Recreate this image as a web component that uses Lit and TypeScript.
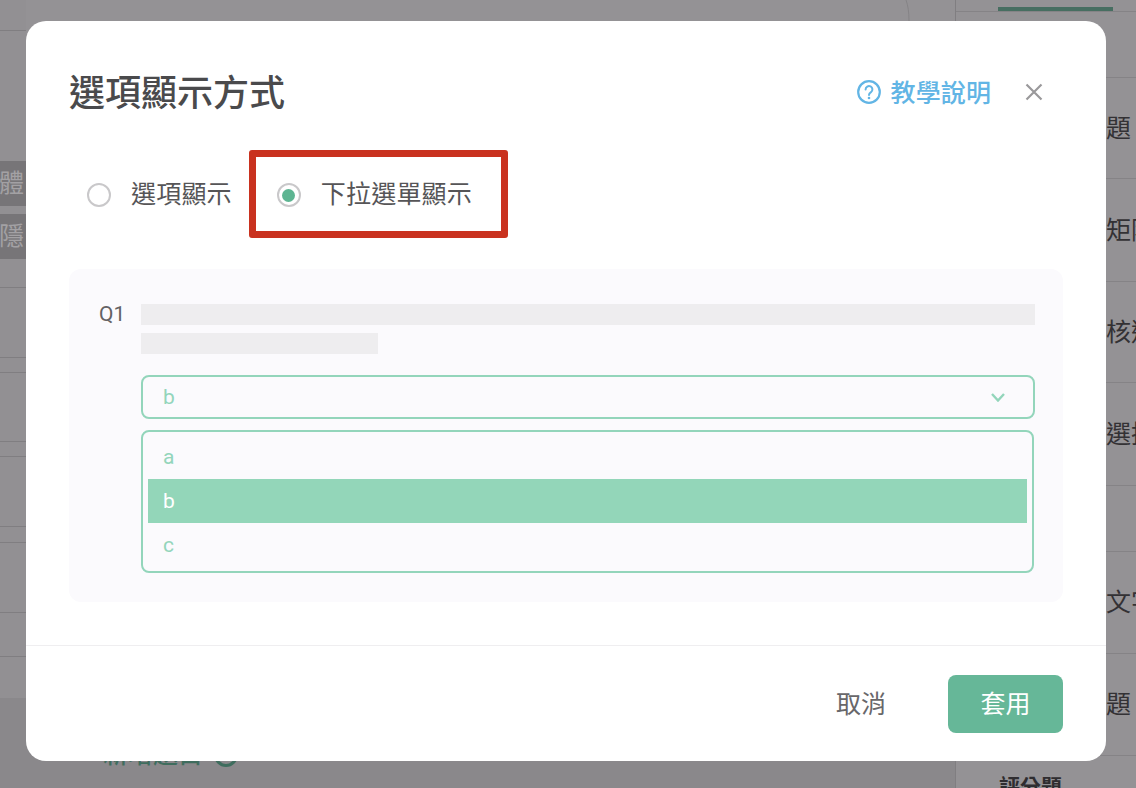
import { LitElement, html, css } from "lit";
import { customElement } from "lit/decorators.js";

@customElement("app-root")
export class AppRoot extends LitElement {
  static styles = css`
    :host {
      display: block;
      width: 1136px;
      height: 788px;
      position: relative;
      overflow: hidden;
      font-family: "Roboto", "Noto Sans CJK TC", sans-serif;
      background: #949295;
    }
    * { box-sizing: border-box; }

    /* dimmed page behind the dialog */
    .page { display: flex; height: 788px; }
    .left { width: 955px; flex: none; display: flex; flex-direction: column; position: relative; }
    .side { width: 26px; flex: 1; display: flex; flex-direction: column; overflow: hidden; background: #929093; }
    .line { flex: none; border-bottom: 1px solid #807e81; }
    .tag {
      flex: none; height: 45px; background: #777578; color: #a3a1a4;
      font-size: 25px; line-height: 45px; display: flex; justify-content: flex-end; padding-right: 2px;
      white-space: nowrap;
    }
    .lower { height: 90px; flex: none; background: #8a888b; display: flex; padding: 42px 0 0 103px; gap: 8px; color: #3f6d5e; font-size: 25px; line-height: 30px; font-weight: 500; }
    .lower-icon { width: 24px; height: 24px; margin: 3px 0 0 3px; border: 3px solid #3f6d5e; border-radius: 50%; }
    .right { flex: none; width: 181px; height: 788px; overflow: hidden; border-left: 1px solid #807e81; display: flex; flex-direction: column; }
    .tabs { height: 78px; flex: none; border-bottom: 1px solid #858386; position: relative; }
    .tabline { height: 1px; background: #858386; margin-top: 11px; }
    .tabbar { position: absolute; left: 42px; top: 7px; width: 115px; height: 4px; background: #476e61; }
    .row {
      flex: none; display: flex; align-items: center; padding: 0 0 5px 150px; border-bottom: 1px solid #858386;
      font-size: 25px; color: #333134; white-space: nowrap; overflow: hidden;
    }
    .score { padding: 16px 0 0 43px; font-size: 21px; font-weight: 700; color: #2f2d30; line-height: 30px; white-space: nowrap; }
    .curve { position: absolute; left: 900px; top: 0; }

    /* dialog */
    .modal {
      position: absolute; left: 26px; top: 21px; width: 1080px; height: 740px;
      background: #fff; border-radius: 20px; display: flex; flex-direction: column;
    }
    .header { height: 142px; flex: none; display: flex; align-items: center; padding: 0 63px 0 44px; }
    .title { font-size: 36px; font-weight: 500; color: #4a4a4c; flex: 1; line-height: 1; padding-top: 3px; margin-left: -1px; }
    .help { display: flex; align-items: center; gap: 10px; color: #62b5e5; font-size: 25px; font-weight: 500; }
    .help span { margin-bottom: 2px; letter-spacing: 0.1px; }
    .help svg { display: block; }
    .close { margin-left: 34px; display: block; }

    .radios { height: 64px; flex: none; display: flex; align-items: center; padding-left: 61px; }
    .radio { width: 24px; height: 24px; border-radius: 50%; border: 2px solid #c9c8ca; display: flex; align-items: center; justify-content: center; flex: none; }
    .dot { width: 13px; height: 13px; border-radius: 50%; background: #5db592; }
    .radio-label { font-size: 25px; color: #565557; margin: 0 0 2px 20px; line-height: 1; letter-spacing: 0.2px; }
    .second { margin-left: 45px; }
    .mark {
      position: absolute; left: 223px; top: 129px; width: 259px; height: 88px;
      border: 7px solid #c9321f; border-radius: 3px;
    }

    .panel {
      margin: 42px 43px 0; height: 333px; flex: none; background: #fbfafd; border-radius: 12px;
      padding: 35px 28px 0 30px; display: flex;
    }
    .qno { width: 42px; flex: none; font-size: 21px; color: #636264; line-height: 21px; }
    .qbody { flex: 1; display: flex; flex-direction: column; }
    .bar { height: 21px; background: #eeedef; }
    .bar + .bar { margin-top: 8px; width: 237px; }
    .select {
      margin-top: 21px; height: 44px; border: 2px solid #93d5bb; border-radius: 8px;
      padding: 0 28px 0 20px; display: flex; align-items: center; justify-content: space-between;
      color: #93d5bb; font-size: 21px;
    }
    .list { margin: 11px 1px 0 0; height: 143px; border: 2px solid #93d5bb; border-radius: 8px; padding: 3px 5px 4px; }
    .item { height: 44px; display: flex; align-items: center; padding-left: 15px; color: #93d5bb; font-size: 21px; }
    .item.on { background: #93d6b9; color: #fff; }

    .footer {
      margin-top: 43px; flex: 1; border-top: 1px solid #efeef0;
      display: flex; align-items: center; justify-content: flex-end; padding: 0 43px 0 0;
    }
    .cancel { font-size: 25px; color: #68676a; margin: 0 62px 4px 0; }
    .apply {
      width: 115px; height: 58px; background: #66b798; color: #fff; border-radius: 8px; font-size: 25px;
      display: flex; align-items: center; justify-content: center; padding-bottom: 3px;
    }
  `;

  render() {
    return html`
      <div class="page">
        <div class="left">
          <div class="side">
            <div class="line" style="height:31px"></div>
            <div style="height:130px;flex:none"></div>
            <div class="tag">體</div>
            <div style="height:8px;flex:none"></div>
            <div class="tag">隱</div>
            <div class="line" style="height:29px"></div>
            <div class="line" style="height:70px"></div>
            <div class="line" style="height:15px"></div>
            <div class="line" style="height:69px"></div>
            <div class="line" style="height:15px"></div>
            <div class="line" style="height:70px"></div>
            <div class="line" style="height:16px"></div>
            <div class="line" style="height:70px"></div>
            <div class="line" style="height:44px"></div>
          </div>
          <div class="lower">
            <span>新增題目</span>
            <span class="lower-icon"></span>
          </div>
          <svg class="curve" width="12" height="22" viewBox="0 0 12 22" fill="none">
            <path d="M6 0 Q9 8 9 21" stroke="#858386" stroke-width="1"></path>
          </svg>
        </div>
        <div class="right">
          <div class="tabs">
            <div class="tabline"></div>
            <div class="tabbar"></div>
          </div>
          <div class="row" style="height:101px">題</div>
          <div class="row" style="height:103px">矩陣</div>
          <div class="row" style="height:101px">核選</div>
          <div class="row" style="height:103px">選擇</div>
          <div class="row" style="height:66px"></div>
          <div class="row" style="height:102px">文字</div>
          <div class="row" style="height:102px">題</div>
          <div class="score">評分題</div>
        </div>
      </div>

      <div class="modal">
        <div class="header">
          <div class="title">選項顯示方式</div>
          <div class="help">
            <svg width="24" height="24" viewBox="0 0 24 24" fill="none">
              <circle cx="12" cy="12" r="10.8" stroke="#62b5e5" stroke-width="2.2"></circle>
              <path d="M8.6 9.4a3.4 3.4 0 1 1 5.4 2.8c-1.2.8-2 1.4-2 2.9" stroke="#62b5e5" stroke-width="2" stroke-linecap="round"></path>
              <circle cx="12" cy="18" r="1.3" fill="#62b5e5"></circle>
            </svg>
            <span>教學說明</span>
          </div>
          <svg class="close" width="18" height="18" viewBox="0 0 18 18" fill="none">
            <path d="M1.5 1.5 16.5 16.5M16.5 1.5 1.5 16.5" stroke="#9a999b" stroke-width="2.2"></path>
          </svg>
        </div>
        <div class="radios">
          <span class="radio"></span>
          <span class="radio-label">選項顯示</span>
          <span class="radio second"><span class="dot"></span></span>
          <span class="radio-label">下拉選單顯示</span>
        </div>
        <div class="mark"></div>
        <div class="panel">
          <div class="qno">Q1</div>
          <div class="qbody">
            <div class="bar"></div>
            <div class="bar"></div>
            <div class="select">
              <span>b</span>
              <svg width="14" height="9" viewBox="0 0 14 9" fill="none">
                <path d="M1 1 7 7.5 13 1" stroke="#93d5bb" stroke-width="2.4"></path>
              </svg>
            </div>
            <div class="list">
              <div class="item">a</div>
              <div class="item on">b</div>
              <div class="item">c</div>
            </div>
          </div>
        </div>
        <div class="footer">
          <span class="cancel">取消</span>
          <span class="apply">套用</span>
        </div>
      </div>
    `;
  }
}
